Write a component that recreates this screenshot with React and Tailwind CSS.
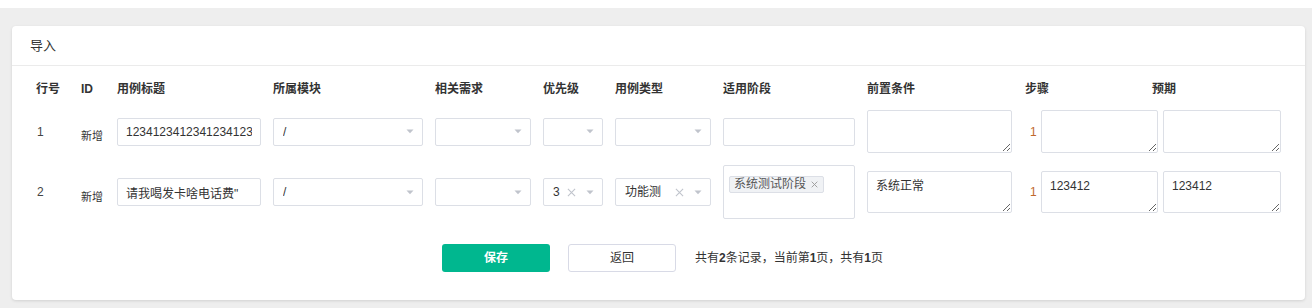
import React from "react";

const FONT = { fontFamily: '"Liberation Sans", "Noto Sans CJK SC", sans-serif' };

function Caret() {
  return (
    <svg width="8" height="5" viewBox="0 0 8 5" className="shrink-0">
      <path d="M0.5 0.5 L7.5 0.5 L4 4.2 Z" fill="#c0c4cc" />
    </svg>
  );
}

function ClearX({ size = 9 }) {
  return (
    <svg width={size} height={size} viewBox="0 0 10 10" className="shrink-0">
      <path d="M1 1 L9 9 M9 1 L1 9" stroke="#c0c4cc" strokeWidth="1.2" />
    </svg>
  );
}

function Select({ w, value, clear }) {
  return (
    <div
      className="h-[28px] border border-[#dcdfe6] rounded-[2px] bg-white flex items-center pl-[9px] pr-[8px] text-[12px] text-[#333]"
      style={{ width: w }}
    >
      <span className="flex-1 whitespace-nowrap overflow-hidden">{value}</span>
      {clear && (
        <span className="mr-[10px] flex items-center">
          <ClearX />
        </span>
      )}
      <Caret />
    </div>
  );
}

function TextArea({ w, h, value }) {
  return (
    <textarea
      readOnly
      defaultValue={value}
      className="block border border-[#dcdfe6] rounded-[2px] bg-white text-[12px] text-[#333] px-[8px] py-[5px] outline-none"
      style={{ width: w, height: h, ...FONT }}
    />
  );
}

function Input({ w, value }) {
  return (
    <input
      readOnly
      value={value}
      className="block h-[28px] border border-[#dcdfe6] rounded-[2px] bg-white text-[12px] text-[#333] px-[8px] outline-none"
      style={{ width: w, ...FONT }}
    />
  );
}

const headers = [
  ["行号", "w-[45px]"],
  ["ID", "w-[36px]"],
  ["用例标题", "w-[156px]"],
  ["所属模块", "w-[162px]"],
  ["相关需求", "w-[108px]"],
  ["优先级", "w-[72px]"],
  ["用例类型", "w-[108px]"],
  ["适用阶段", "w-[144px]"],
  ["前置条件", "w-[158px]"],
  ["步骤", "w-[127px]"],
  ["预期", "w-[60px]"],
];

function Row({ no, title, pri, type, stage, pre, step, expect }) {
  return (
    <div className="flex items-center py-[6px]">
      <div className="w-[45px] text-[12px] text-[#444] pl-[1px]">{no}</div>
      <div className="w-[36px] text-[11px] text-[#333] mt-[10px]">新增</div>
      <div className="w-[156px]">
        <Input w={144} value={title} />
      </div>
      <div className="w-[162px]">
        <Select w={150} value="/" />
      </div>
      <div className="w-[108px]">
        <Select w={96} value="" />
      </div>
      <div className="w-[72px]">
        <Select w={60} value={pri} clear={!!pri} />
      </div>
      <div className="w-[108px]">
        <Select w={96} value={type} clear={!!type} />
      </div>
      <div className="w-[144px]">
        {stage ? (
          <div className="w-[132px] h-[54px] border border-[#dcdfe6] rounded-[2px] bg-white pt-[5px] pl-[5px]">
            <span className="inline-flex items-center h-[17px] bg-[#f0f2f5] border border-[#dcdfe6] rounded-[2px] pl-[4px] pr-[5px] text-[12px] text-[#555]">
              {stage}
              <span className="ml-[5px] flex items-center">
                <svg width="7" height="7" viewBox="0 0 10 10">
                  <path d="M1 1 L9 9 M9 1 L1 9" stroke="#999" strokeWidth="1.3" />
                </svg>
              </span>
            </span>
          </div>
        ) : (
          <div className="w-[132px] h-[28px] border border-[#dcdfe6] rounded-[2px] bg-white" />
        )}
      </div>
      <div className="w-[158px]">
        <TextArea w={145} h={pre === "" ? 43 : 42} value={pre} />
      </div>
      <div className="flex items-center">
        <span className="w-[16px] pl-[5px] text-[12px] text-[#c0692c]">1</span>
        <TextArea w={117} h={pre === "" ? 43 : 42} value={step} />
        <div className="w-[5px]" />
        <TextArea w={118} h={pre === "" ? 43 : 42} value={expect} />
      </div>
    </div>
  );
}

export default function App() {
  return (
    <div style={FONT} className="w-[1312px] h-[308px] bg-white">
      <div className="h-[8px] bg-white" />
      <div className="h-[300px] bg-[#eeeeee] pt-[18px] pl-[12px] pr-[7px]">
        <div className="w-[1293px] h-[274px] bg-white rounded-[4px] shadow-[0_1px_3px_rgba(0,0,0,0.12)]">
          <div className="h-[40px] px-[18px] flex items-center border-b border-[#ebebeb] text-[13px] text-[#333]">
            导入
          </div>
          <div className="pl-[24px] pt-[13px]">
            <div className="flex h-[20px] items-center mb-[5px]">
              {headers.map(([h, w]) => (
                <div key={h} className={`${w} text-[12px] font-semibold text-[#333] whitespace-nowrap`}>
                  {h}
                </div>
              ))}
            </div>
            <Row no="1" title="1234123412341234123412341234" pri="" type="" stage="" pre="" step="" expect="" />
            <Row no="2" title={'请我喝发卡啥电话费"'} pri="3" type="功能测" stage="系统测试阶段" pre="系统正常" step="123412" expect="123412" />
          </div>
          <div className="flex justify-center items-center mt-[19px] pl-[8px]">
            <button className="w-[108px] h-[28px] rounded-[3px] bg-[#00b78f] text-white text-[12px] font-semibold">
              保存
            </button>
            <button className="ml-[18px] w-[108px] h-[28px] rounded-[3px] border border-[#d8dae6] bg-white text-[#333] text-[12px]">
              返回
            </button>
            <div className="ml-[19px] text-[12px] text-[#333]">
              共有<b>2</b>条记录，当前第<b>1</b>页，共有<b>1</b>页
            </div>
          </div>
        </div>
      </div>
    </div>
  );
}
